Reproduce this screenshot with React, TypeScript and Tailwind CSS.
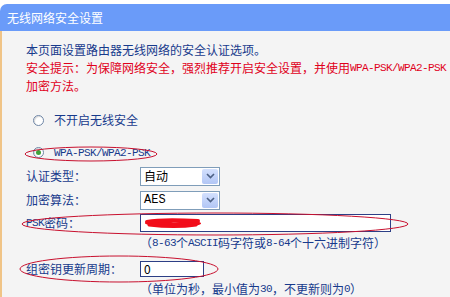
import React from "react";

const cjk = { fontFamily: '"Noto Sans CJK SC", "Noto Sans", sans-serif' };
const mono = { fontFamily: '"Liberation Mono", "DejaVu Sans Mono", monospace' };

function Radio({ checked }: { checked?: boolean }) {
  return (
    <span className="relative inline-flex h-[11px] w-[11px] items-center justify-center rounded-full border border-[#6f86a6] bg-white shadow-[inset_1px_1px_1px_rgba(0,0,0,0.15)]">
      {checked && <span className="h-[5px] w-[5px] rounded-full bg-[#3fa33a]" />}
    </span>
  );
}

function Select({ value, monoText }: { value: string; monoText?: boolean }) {
  return (
    <div className="flex h-[19px] w-[80px] items-center border border-[#7f9db9] bg-white">
      <span className="flex-1 pl-[3px] text-[12px] leading-none text-black" style={monoText ? mono : cjk}>
        {value}
      </span>
      <span className="mr-[1px] flex h-[15px] w-[16px] items-center justify-center rounded-[2px] bg-gradient-to-b from-[#d3e0fd] to-[#b2c6f5]">
        <svg width="9" height="6" viewBox="0 0 9 6">
          <path d="M1 1 L4.5 4.5 L8 1" stroke="#4d6185" strokeWidth="1.6" fill="none" />
        </svg>
      </span>
    </div>
  );
}

function M({ children }: { children: React.ReactNode }) {
  return (
    <span className="text-[11px] leading-none tracking-[-0.6px]" style={mono}>
      {children}
    </span>
  );
}

export default function App() {
  return (
    <div className="relative h-[297px] w-[450px] overflow-hidden bg-white text-[12px] leading-none" style={cjk}>
      <div className="h-[4px]" />
      <div className="flex h-[27px] items-center rounded-tl-[7px] bg-[#6a9bf9] pl-[7px] text-[12px] text-white">
        无线网络安全设置
      </div>
      <div className="h-[266px] border-l-2 border-[#f0c487] bg-[#f4f4f4] pl-[24px] text-[#173a8c]">
        <div className="h-[10px]" />
        <div className="flex h-[18px] items-center whitespace-nowrap">本页面设置路由器无线网络的安全认证选项。</div>
        <div className="flex h-[18px] items-center whitespace-nowrap text-[#e0001b]">
          安全提示：为保障网络安全，强烈推荐开启安全设置，并使用
          <M>WPA-PSK/WPA2-PSK</M>
        </div>
        <div className="flex h-[18px] items-center text-[#e0001b]">加密方法。</div>

        <div className="mt-[16px] flex h-[18px] items-center pl-[7px]">
          <Radio />
          <span className="ml-[10px] text-[#173a8c]">不开启无线安全</span>
        </div>

        <div className="mt-[14px] flex h-[18px] items-center pl-[7px]">
          <Radio checked />
          <span className="ml-[10px]">
            <M>WPA-PSK/WPA2-PSK</M>
          </span>
        </div>

        <div className="mt-[5px] flex h-[20px] items-center">
          <span className="w-[114px]">认证类型：</span>
          <Select value="自动" />
        </div>

        <div className="mt-[4px] flex h-[20px] items-center">
          <span className="w-[114px]">加密算法：</span>
          <Select value="AES" monoText />
        </div>

        <div className="mt-[3px] flex h-[20px] items-center">
          <span className="flex w-[114px] items-center">
            <M>PSK</M>密码：
          </span>
          <div className="relative h-[18px] w-[251px] border border-[#2d3f86] bg-white">
            <svg className="absolute left-0 top-0" width="70" height="16" viewBox="0 0 70 16">
              <path
                d="M4 8 C12 5, 22 6, 30 7 C40 8, 48 5, 58 7 C62 8, 60 10, 54 11 C44 12, 30 11, 18 11 C10 11, 5 10, 4 8 Z"
                fill="#f20d1a"
              />
              <path d="M6 7 C20 4, 40 5, 57 6" stroke="#f20d1a" strokeWidth="4" fill="none" strokeLinecap="round" />
              <path d="M8 10 C24 12, 42 12, 55 10" stroke="#f20d1a" strokeWidth="3" fill="none" strokeLinecap="round" />
            </svg>
          </div>
        </div>

        <div className="flex h-[20px] items-center whitespace-nowrap pl-[114px]">
          （<M>8-63</M>个<M>ASCII</M>码字符或<M>8-64</M>个十六进制字符）
        </div>

        <div className="mt-[8px] flex h-[16px] items-center">
          <span className="w-[114px]">组密钥更新周期：</span>
          <div className="flex h-[16px] w-[64px] items-center border border-[#2d3f86] bg-white pl-[3px] text-[12px] text-black" style={cjk}>
            0
          </div>
        </div>

        <div className="mt-[4px] flex h-[16px] items-center whitespace-nowrap pl-[114px]">
          （单位为秒，最小值为<M>30</M>，不更新则为<M>0</M>）
        </div>
      </div>

      <svg className="pointer-events-none absolute left-0 top-0" width="450" height="297" viewBox="0 0 450 297">
        <ellipse cx="91" cy="154" rx="66" ry="7" stroke="#c8102e" strokeWidth="1" fill="none" />
        <ellipse cx="215" cy="224" rx="193" ry="11" stroke="#c8102e" strokeWidth="1" fill="none" />
        <ellipse cx="119" cy="269" rx="99" ry="13" stroke="#c8102e" strokeWidth="1" fill="none" />
      </svg>
    </div>
  );
}
